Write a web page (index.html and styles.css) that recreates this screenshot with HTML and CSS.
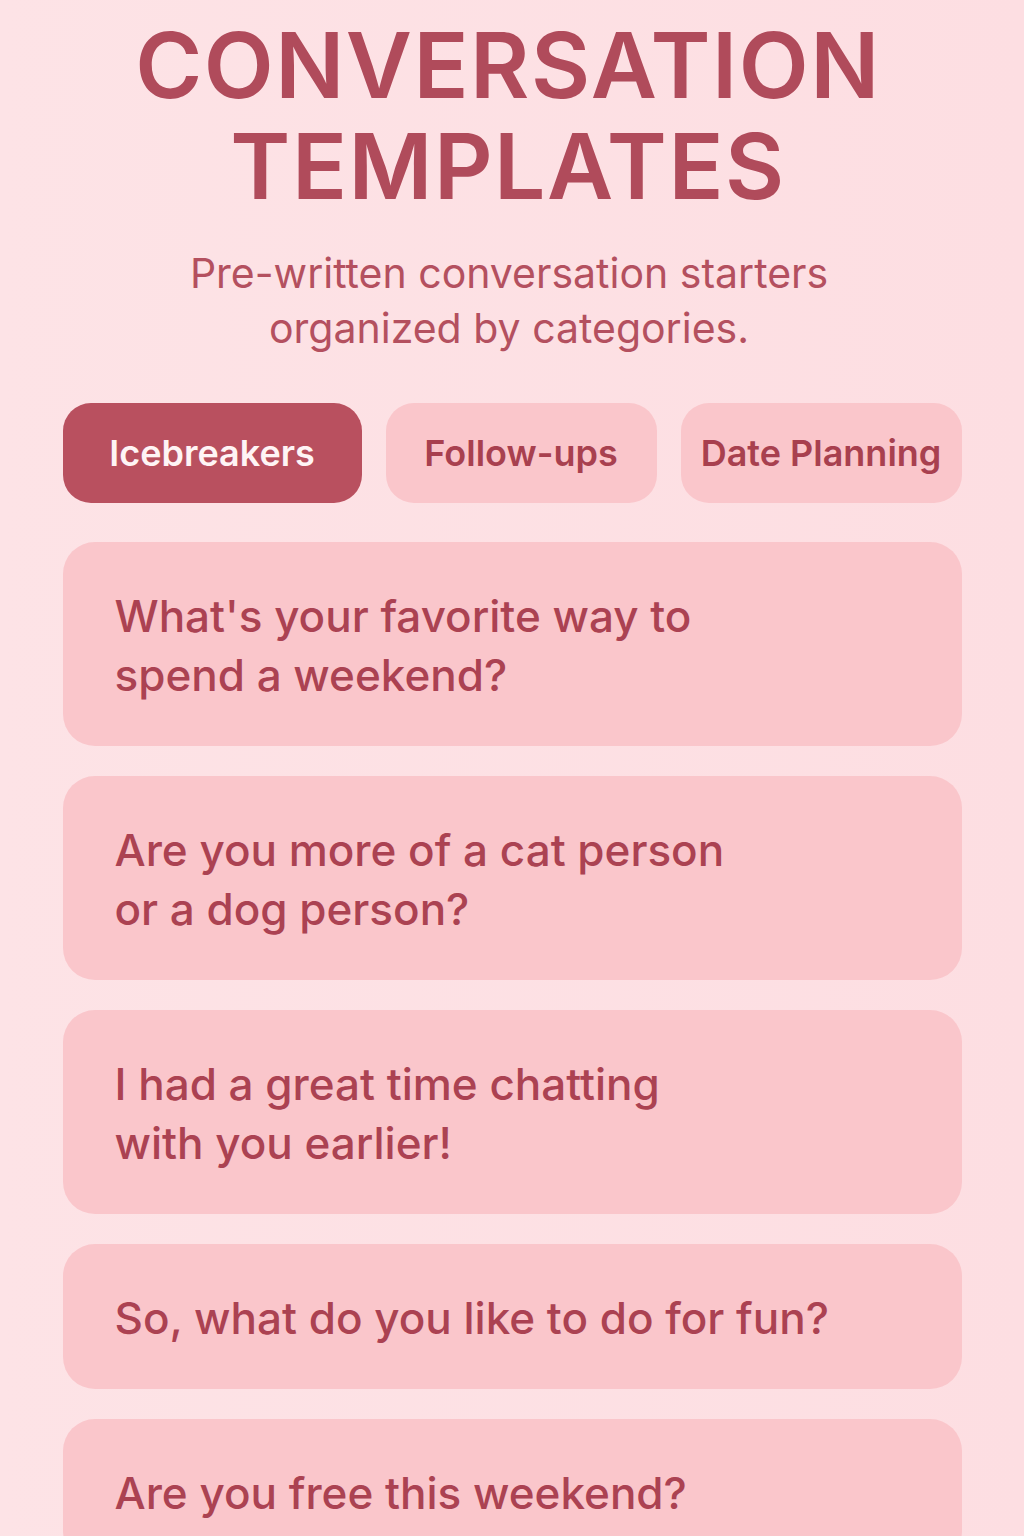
FILE: index.html
```html
<!DOCTYPE html>
<html lang="en">
<head>
<meta charset="utf-8">
<title>Conversation Templates</title>
<link rel="stylesheet" href="styles.css">
</head>
<body>
<main class="page">
  <header class="header">
    <h1 class="title">CONVERSATION<br>TEMPLATES</h1>
    <p class="subtitle">Pre-written conversation starters<br>organized by categories.</p>
  </header>
  <nav class="tabs">
    <button class="tab tab-active">Icebreakers</button>
    <button class="tab">Follow-ups</button>
    <button class="tab">Date Planning</button>
  </nav>
  <section class="cards">
    <div class="card"><p class="card-text">What's your favorite way to<br>spend a weekend?</p></div>
    <div class="card"><p class="card-text">Are you more of a cat person<br>or a dog person?</p></div>
    <div class="card"><p class="card-text">I had a great time chatting<br>with you earlier!</p></div>
    <div class="card"><p class="card-text">So, what do you like to do for fun?</p></div>
    <div class="card"><p class="card-text">Are you free this weekend?</p></div>
  </section>
</main>
</body>
</html>
```
FILE: styles.css
```css
* { box-sizing: border-box; }
html, body { margin: 0; padding: 0; }
body {
  background: linear-gradient(90deg, #fde3e6 0%, #fddee2 100%);
  font-family: Inter, "Noto Sans", "Liberation Sans", sans-serif;
  color: #ad4656;
  min-height: 1536px;
}
.page {
  width: 899px;
  margin: 0 auto;
  padding-top: 15px;
}
.header { text-align: center; }
.title {
  margin: 0 0 0 -8px;
  font-size: 91px;
  font-weight: 560;
  line-height: 101px;
  letter-spacing: 1.5px;
  color: #b04b5b;
}
.subtitle {
  margin: 29px 0 0 -6px;
  font-size: 41px;
  line-height: 55px;
  font-weight: 400;
  color: #b4505f;
}
.tabs {
  display: grid;
  grid-template-columns: 299px 271px 281px;
  justify-content: space-between;
  margin-top: 47px;
}
.tab {
  height: 100px;
  border: none;
  border-radius: 28px;
  background: #fac6cb;
  color: #a8404f;
  font-family: inherit;
  font-size: 36px;
  font-weight: 560;
  padding: 0;
  white-space: nowrap;
}
.tab-active {
  background: #b9505f;
  color: #fff4f5;
}
.cards {
  display: flex;
  flex-direction: column;
  gap: 30px;
  margin-top: 39px;
}
.card {
  background: #fac6cb;
  border-radius: 32px;
  padding: 45px 52px 41px;
}
.card-text {
  margin: 0;
  font-size: 44px;
  line-height: 59px;
  font-weight: 500;
  color: #ab4252;
}
```
